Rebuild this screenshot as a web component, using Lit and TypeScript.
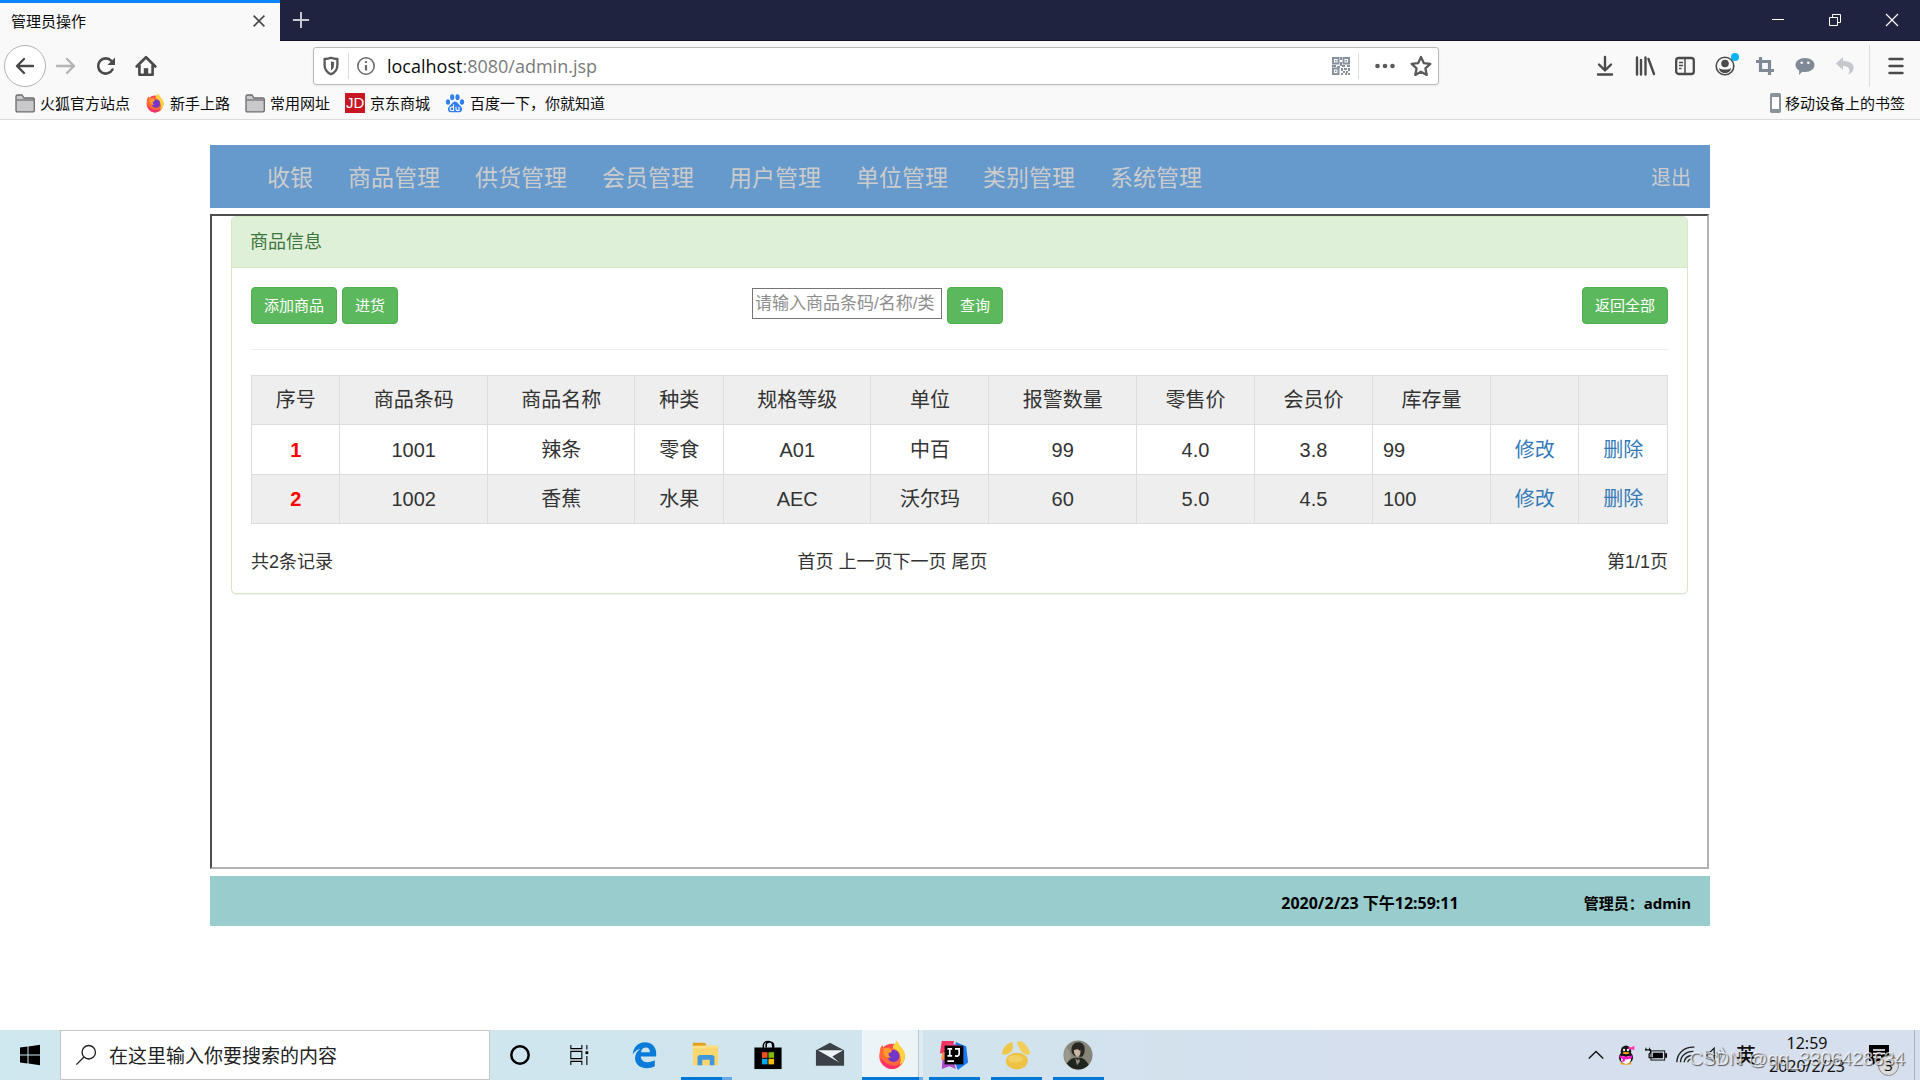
import { LitElement, html, svg, css, nothing } from "lit";
import type { TemplateResult } from "lit";
import { customElement } from "lit/decorators.js";

const icon = (name: string, size = 20): TemplateResult => html`
  <svg class="icon" width=${size} height=${size} viewBox=${boxes[name] ?? "0 0 20 20"} aria-hidden="true">${shapes[name]}</svg>`;

const boxes: Record<string, string> = {
  start: "0 0 24 24", lens: "0 0 24 24", cortana: "0 0 24 24", tasks: "0 0 24 24",
  edge: "0 0 32 32", explorer: "0 0 32 32", store: "0 0 32 32", mail: "0 0 32 32",
  firefox: "0 0 32 32", idea: "0 0 32 32", shell: "0 0 32 32", avatar: "0 0 32 32",
  battery: "0 0 24 24", qq: "0 0 24 24", wifi: "0 0 24 24", volume: "0 0 24 24", notice: "0 0 24 24",
};

const firefox = svg`
  <circle cx="16" cy="17.5" r="13.5" fill="#ff4a4f"/>
  <path d="M17 6c2-1 3-3 3.500-5.500 2 2 3.500 4 4 6.500 4 3 6 7 5 12-1 7-6.500 12-13 12 6-2 9.500-6 8.500-11-.6-5-4-7-8-8z" fill="#ffd43b"/>
  <path d="M3 13c0-4 1-6 3-8 0 1.500.5 2.500 1.500 3.500 3-.5 6-1 8.500 0 5 1 9 5 9 10 0 6-4 10-9 11.500C8 30 2.500 23 3 13z" fill="#ff6a35"/>
  <path d="M4 19c1 7 6 12 12 12 5 0 9-3 11-7-3 3-7 4-11 3-6-1-10-5-12-8z" fill="#ff2f6b"/>
  <circle cx="17.500" cy="17" r="6.500" fill="#7436c9"/>
  <path d="M7 9c3-1 7-.5 8.500 2 1 2-2 2.500-3 3-1 2 1 4 3 4.500-4 1.500-8-1-8.500-5z" fill="#ff9a2e"/>`;

const shapes: Record<string, unknown> = {
  back: svg`<path d="M18 10H2.500M9 3l-7 7 7 7" fill="none" stroke="#4a4a4b" stroke-width="2.400" stroke-linecap="round" stroke-linejoin="round"/>`,
  forward: svg`<path d="M1 10h17M11 3l7 7-7 7" fill="none" stroke="#b5b5b6" stroke-width="2.400" stroke-linecap="round" stroke-linejoin="round"/>`,
  reload: svg`<path d="M16.500 13.500A7.600 7.600 0 1 1 15.500 5" fill="none" stroke="#4a4a4b" stroke-width="2.600" stroke-linecap="round"/><path d="M19 1.500V9h-7.500z" fill="#4a4a4b"/>`,
  home: svg`<path d="M1.500 10.500 10 2l8.500 8.500M4 9.500V18h12V9.500" fill="none" stroke="#4a4a4b" stroke-width="2.400" stroke-linecap="round" stroke-linejoin="round"/><path d="M8 18v-6h4v6z" fill="#4a4a4b"/>`,
  shield: svg`<path d="M10 1.800c2 .9 4.200 1.200 6.400 1.200v6c0 4.500-2.600 7.600-6.400 9.300C6.200 16.600 3.600 13.500 3.600 9V3C5.800 3 8 2.700 10 1.800z" fill="none" stroke="#5a5a5b" stroke-width="2.300" stroke-linejoin="round"/><path d="M10 5.500v9c2-1.300 3-3 3-5.500V6z" fill="#5a5a5b"/>`,
  info: svg`<circle cx="10" cy="10" r="8.200" fill="none" stroke="#6a6a6b" stroke-width="1.600"/><path d="M10 9v5.500M10 5.200v1.900" stroke="#6a6a6b" stroke-width="2.200"/>`,
  qr: svg`<g fill="none" stroke="#87919d" stroke-width="2"><rect x="2" y="2" width="5.500" height="5.500"/><rect x="12.500" y="2" width="5.500" height="5.500"/><rect x="2" y="12.500" width="5.500" height="5.500"/></g><path d="M4 4h1.500v1.500H4zM14.500 4H16v1.500h-1.500zM4 14.500h1.500V16H4zM9 1h2v3H9zM9 6h2v4H9zM1 9h4v2H1zM6 10h3v2H6zM11 9h3v2h-3zM16 9h3v2h-3zM10 12h2v3h-2zM13 12h3v2h-3zM17 12h2v3h-2zM12 15h2v2h-2zM15 15h2v2h-2zM10 17h2v2h-2zM14 17h2v2h-2zM17 17h2v2h-2z" fill="#87919d"/>`,
  dots: svg`<g fill="#5a5a5b"><circle cx="2.500" cy="10" r="2.300"/><circle cx="10" cy="10" r="2.300"/><circle cx="17.500" cy="10" r="2.300"/></g>`,
  star: svg`<path d="m10 1.800 2.500 5.500 6 .7-4.500 4.100 1.200 6L10 15.200 4.800 18.100l1.200-6L1.500 8l6-.7z" fill="none" stroke="#5a5a5b" stroke-width="2.100" stroke-linejoin="round"/>`,
  download: svg`<path d="M10 1v13M4 8.500l6 6 6-6M3 18.500h14" fill="none" stroke="#4a4a4b" stroke-width="2.400" stroke-linecap="round" stroke-linejoin="round"/>`,
  library: svg`<path d="M2 1.500v17M6 4v14.500M10.500 1.500v17M13.500 3 19 18" fill="none" stroke="#4a4a4b" stroke-width="2.400" stroke-linecap="round"/>`,
  sidebar: svg`<rect x="1.200" y="2" width="17.600" height="16" rx="2.500" fill="none" stroke="#4a4a4b" stroke-width="2.300"/><path d="M10 3v14M4 6.500h4M4 9.500h4M4 12.500h2.500" stroke="#4a4a4b" stroke-width="1.500"/>`,
  account: svg`<circle cx="10" cy="10" r="8.800" fill="none" stroke="#4a4a4b" stroke-width="1.600"/><circle cx="10" cy="7.500" r="3.800" fill="#4a4a4b"/><path d="M4 12c2 2 10 2 12 0 0 3-3 5-6 5s-6-2-6-5z" fill="#4a4a4b"/>`,
  crop: svg`<path d="M5.500 1v13.500H19M1 5.500h13.500V19" fill="none" stroke="#808a96" stroke-width="3.200"/>`,
  chat: svg`<path d="M10 2c5.500 0 9.500 3 9.500 7s-4 7-9.500 7c-1 0-2-.1-2.800-.3L4 19l.2-4.500C1.900 13.200.5 11.200.5 9c0-4 4-7 9.500-7z" fill="#808a96"/><circle cx="6.700" cy="6.800" r="1.300" fill="#f9f9fa"/><circle cx="13.300" cy="6.800" r="1.300" fill="#f9f9fa"/>`,
  undo: svg`<path d="M8 1 .8 7.500 8 14v-4c4 0 6.500 1.500 6.500 4.500 0 1.800-.8 3-1.800 4 3.800-1 6-3.500 6-6.800C18.700 7.500 14.500 5 8 5z" fill="#c4c8cf"/>`,
  menu: svg`<path d="M3.500 3h13M3.500 10h13M3.500 17h13" stroke="#4a4a4b" stroke-width="2.400" stroke-linecap="round"/>`,
  folder: svg`<path d="M1 17.500v-14c0-.8.500-1.500 1.500-1.500H7l2 3h9c.8 0 1.300.5 1.300 1.300v11.200c0 .8-.5 1.300-1.300 1.300H2.300C1.500 18.800 1 18.300 1 17.500z" fill="#c9c9cb" stroke="#6b6b6d" stroke-width="1.300"/><path d="M1.500 7h17.500" stroke="#6b6b6d" stroke-width="1.200"/>`,
  baidu: svg`<g fill="#2f7fee"><ellipse cx="3" cy="9" rx="2.100" ry="2.800"/><ellipse cx="7.200" cy="4.200" rx="2.100" ry="3"/><ellipse cx="12.500" cy="4.200" rx="2.100" ry="3"/><ellipse cx="17" cy="9" rx="2.100" ry="2.800"/><path d="M10 8.500c2 0 3 2 4.500 3.500s3 2.500 2.500 5c-.7 3-4 2.300-7 2.300s-6.300.7-7-2.300c-.5-2.500 1-3.500 2.500-5S8 8.500 10 8.500z"/></g><path d="M8.500 11.500v6H6.800c-2.400 0-2.400-3.500 0-3.500h1.700M11 13.800v2.400c0 1 .7 1.300 1.500 1.300H14v-3.700" fill="none" stroke="#fff" stroke-width="1.100"/>`,
  phone: svg`<rect x="5" y="0" width="11" height="20" rx="1.800" fill="#8a939c"/><rect x="7" y="4" width="7" height="12" fill="#fff"/>`,
  close: svg`<path d="m4 4 12 12M16 4 4 16" stroke="#4a4a4b" stroke-width="1.800"/>`,
  plus: svg`<path d="M10 1v18M1 10h18" stroke="#c9c9d2" stroke-width="2.200"/>`,
  min: svg`<path d="M4 9.500h12" stroke="#fff"/>`,
  restore: svg`<path d="M4.500 7.500h8v8h-8zM7.500 7.500v-3h8v8h-3" fill="none" stroke="#fff"/>`,
  quit: svg`<path d="m4 4 12 12M16 4 4 16" stroke="#fff" stroke-width="1.200"/>`,
  start: svg`<path d="M2 4.600 9.500 3.500v8H2zM10.500 3.400 22 1.800v9.700H10.500zM2 12.500h7.500v8L2 19.400zM10.500 12.500H22v9.700l-11.500-1.600z" fill="#000"/>`,
  lens: svg`<circle cx="15" cy="9" r="7.300" fill="none" stroke="#222" stroke-width="1.500"/><path d="m9.800 14.200-8.300 8.300" stroke="#222" stroke-width="1.500"/>`,
  cortana: svg`<circle cx="12" cy="12" r="8.700" fill="none" stroke="#000" stroke-width="2.500"/>`,
  tasks: svg`<path d="M2 1v4h12V1M2 8h12v8H2zM2 23v-4h12v4M19.500 1v5M19.500 13v10" fill="none" stroke="#000" stroke-width="1.200"/><path d="M18 8h3v3h-3z" fill="#000"/>`,
  edge: svg`<path d="M4 15.500C4.600 8 9.500 2.500 17 2.500c7 0 12 5 12 11.500v3.500H12.500c.3 4 3.500 6.200 7.500 6.200 2.700 0 5.500-.8 7.500-2v6.300c-2.300 1.300-5.200 2-8.500 2C11 30 6.500 25.500 6.500 19.500c0-4.500 2-8 5.800-10C8.800 9.800 6 12 4 15.500zm8.800-2.500h9.500c0-3-1.500-5-4.300-5s-4.700 2-5.200 5z" fill="#0a7bd8"/>`,
  explorer: svg`<path d="M2 3h13l2 4H2z" fill="#e0a11d"/><path d="M2 6h27v21H2z" fill="#fbd66c"/><path d="M15 6h14v2H17L15 9H2V7z" fill="#fde08a"/><path d="M7 27v-9.500l2-1.500h14l2 1.500V27h-5v-6h-8v6z" fill="#3f97dd"/>`,
  store: svg`<path d="M11 9V6c0-6 10-6 10 0v3M14 8V5c0-4 8-4 8 1v2" fill="none" stroke="#000" stroke-width="1.600"/><path d="M1.500 8h29v23h-29z" fill="#000"/><path d="M9.500 13h6v6h-6z" fill="#f25022"/><path d="M16.500 13h6v6h-6z" fill="#7fba00"/><path d="M9.500 20h6v6h-6z" fill="#00a4ef"/><path d="M16.500 20h6v6h-6z" fill="#ffb900"/>`,
  mail: svg`<path d="M1 11 16 3l15 8v16.500H1z" fill="#3b4146"/><path d="M3 11h27l-11.500 6.500L26 24 3 11z" fill="#eef5f8"/>`,
  firefox,
  idea: svg`<path d="M3 1h13l-2 14L1 14z" fill="#f5315f"/><path d="m18 2 11 5 2 17-11 8-5-14z" fill="#1878f0"/><path d="m9 3 14 3 2 12H8z" fill="#e3457c"/><path d="m4 14 10 3 4 14-7-3-8 3z" fill="#b24bd0"/><path d="M4 13h6l-2 8H2z" fill="#ff8a3d"/><rect x="6" y="6" width="20" height="20" fill="#000"/><path d="M9 9.500h5M11.500 9.500V17M9 17h5M17 9.500h4.500V15c0 2-2 2.400-4.500 2M9 22.500h7" fill="none" stroke="#fff" stroke-width="1.800"/>`,
  shell: svg`<path d="M1 15.500C1.500 8.500 5.500 3.500 12 2c1 3 1 6.500-.5 10-2.500 2.500-6.500 4-10.500 3.500z" fill="#efc748"/><path d="M17 2.500c2-1.800 5-1.500 7 .5 3.500 3 6.500 7.500 7.200 12-3 1.200-6 .5-8.200-1.500-2.500-2.500-5-7-6-11z" fill="#f2cd58"/><ellipse cx="17" cy="22.500" rx="11.800" ry="9" fill="#edc245"/><ellipse cx="15.500" cy="20" rx="8" ry="4" fill="#f3d066"/>`,
  avatar: svg`<circle cx="16" cy="16" r="15.500" fill="#85857a"/><path d="M4 7A15 15 0 0 0 4 25l5-8z" fill="#9a998c"/><path d="M4 25c3-4 6-5.500 9-6l6 0c5 1.500 7 5 8.500 7.500-6 7-17 7-23.500-1.500z" fill="#20241f"/><path d="M9 10c0-5 4-8 8-7.500s7 4 6 9c0 3-1 5-3 6.500L12.500 17C10 15.500 8.800 13 9 10z" fill="#2a2723"/><path d="M11.500 11c2-1 4.500-1.500 7-.5.8 3.500-.8 7-2.800 8-2.500-1-4.200-4-4.200-7.500z" fill="#c9b6a2"/><path d="M11 12.500l2.500-5 5 4.500 0-7-6 0z" fill="#2a2723"/><path d="m13 19 3 3 1-3 1 4-3 4z" fill="#9a8f80"/>`,
  caret: svg`<path d="m2 14 8-8 8 8" fill="none" stroke="#111" stroke-width="1.500"/>`,
  qq: svg`<ellipse cx="12" cy="22" rx="7" ry="1.800" fill="#f5a623"/><ellipse cx="12" cy="15" rx="8.500" ry="7.500" fill="#151515"/><ellipse cx="12" cy="17" rx="6" ry="5.700" fill="#fff"/><ellipse cx="12" cy="7.500" rx="6.300" ry="6.800" fill="#151515"/><path d="M4 12c5 2.500 11 2.500 16 0l-1 4c-3 1-6 1.500-8 1.200L10 20H7.500l.5-3.500-3.500-1.500z" fill="#ff12c0"/><path d="M15 1.500 18 3l4-2v5l-4-1-3 1z" fill="#ff35b5"/><ellipse cx="9.700" cy="6" rx="1.300" ry="1.600" fill="#fff"/><ellipse cx="14.300" cy="6" rx="1.300" ry="1.600" fill="#fff"/><ellipse cx="12" cy="9.700" rx="4" ry="1.300" fill="#f5a623"/>`,
  battery: svg`<rect x="6.500" y="7.500" width="15" height="10" fill="none" stroke="#000"/><path d="M8.500 9.500h11v6h-11z" fill="#000"/><path d="M22 10h2v5h-2z" fill="#000"/><path d="M1 4v3M5 4v3" stroke="#000"/><path d="M0 6.500h6v3L4.500 11v4h6" fill="none" stroke="#000" stroke-width="1.300"/>`,
  wifi: svg`<g fill="none" stroke="#222" stroke-width="1.500"><path d="M2 20C2 10 10 3 21 3.500"/><path d="M6 20c0-7 6-12 14-12"/><path d="M10 20c0-4.500 4-7.500 9-7.500"/><path d="M14 20c0-2 2-3.500 4-3.500"/></g>`,
  volume: svg`<path d="M2 9h3.500L10 4.500v15L5.500 15H2z" fill="none" stroke="#111" stroke-width="1.300"/><path d="M13 9c1.500 2 1.500 4 0 6" fill="none" stroke="#222" stroke-width="1.300"/><path d="M16 6.500c3 3.500 3 7.500 0 11M19 4c4.500 5 4.500 11 0 16" fill="none" stroke="#9299a3" stroke-width="1.200"/>`,
  notice: svg`<path d="M2 2h20v16H10l-4 4v-4H2z" fill="#000"/><path d="M6 7h12M6 10.500h12M6 14h8" stroke="#fff" stroke-width="1.300"/>`,
};

interface Product {
  code: string; name: string; kind: string; grade: string; unit: string;
  alarm: string; retail: string; member: string; stock: string;
}

const MENU = ["收银", "商品管理", "供货管理", "会员管理", "用户管理", "单位管理", "类别管理", "系统管理"];
const COLUMNS: [string, number][] = [
  ["序号", 3], ["商品条码", 5], ["商品名称", 5], ["种类", 3], ["规格等级", 5], ["单位", 4],
  ["报警数量", 5], ["零售价", 4], ["会员价", 4], ["库存量", 4], ["", 3], ["", 3],
];
const PRODUCTS: Product[] = [
  { code: "1001", name: "辣条", kind: "零食", grade: "A01", unit: "中百", alarm: "99", retail: "4.0", member: "3.8", stock: "99" },
  { code: "1002", name: "香蕉", kind: "水果", grade: "AEC", unit: "沃尔玛", alarm: "60", retail: "5.0", member: "4.5", stock: "100" },
];

const base = css`
  * { box-sizing: border-box; }
  button, input { font: inherit; color: inherit; margin: 0; }
  button { border: 0; background: none; padding: 0; cursor: pointer; }
  a { color: inherit; text-decoration: none; }
  .icon { display: block; flex: none; overflow: visible; }
`;

@customElement("browser-chrome")
export class BrowserChrome extends LitElement {
  static styles = [base, css`
    :host { display: block; background: #f9f9fa; border-bottom: 1px solid #dcdcdd; font: 15px/20px "Noto Sans", "Noto Sans CJK SC", sans-serif; color: #0c0c0d; }
    .tabs { display: flex; height: 41px; background: #202340; border-bottom: 1px solid #12132b; }
    .tab { display: flex; align-items: center; justify-content: space-between; width: 280px; height: 41px; padding: 0 12px 3px 11px; background: #f9f9fa; border-top: 3px solid #0a84ff; }
    .new { width: 42px; display: grid; place-items: center; }
    .controls { display: flex; margin-left: auto; }
    .controls button { width: 57px; display: grid; place-items: center; }
    .bar { display: flex; align-items: center; height: 50px; }
    .nav { display: flex; align-items: center; padding-left: 4px; width: 313px; flex: none; }
    .nav button { width: 40px; height: 42px; display: grid; place-items: center; }
    .nav .round { width: 42px; border: 1px solid #b4b4b6; border-radius: 50%; background: #fff; }
    .url { display: flex; align-items: center; flex: 1; height: 38px; background: #fff; border: 1px solid #b9b9bb; border-radius: 3px; box-shadow: 0 1px 3px #0001; }
    .url button { height: 36px; width: 34px; display: grid; place-items: center; }
    .url .wide { width: 51px; }
    .url .narrow { width: 22px; margin-right: 6px; }
    .url input { border: 0; outline: 0; background: none; min-width: 0; color: transparent; caret-color: #000; padding: 0; height: 34px; }
    .address { display: grid; flex: 1; font-size: 18px; align-items: center; padding-left: 4px; }
    .address > * { grid-area: 1 / 1; }
    .shown { pointer-events: none; color: #7b7b7c; font-family: "Open Sans", sans-serif; }
    .shown b { font-weight: 400; color: #0c0c0d; }
    .line { width: 1px; height: 26px; background: #dcdcde; }
    .tools { display: flex; align-items: center; margin-left: 146px; padding-right: 4px; }
    .tools button { width: 40px; height: 40px; display: grid; place-items: center; position: relative; }
    .tools .line { height: 42px; margin: 0 6px 0 4px; }
    .dot { position: absolute; right: 6px; top: 7px; width: 8px; height: 8px; border-radius: 50%; background: #00b3f4; }
    .marks { display: flex; gap: 15px; height: 28px; padding: 0 15px 4px; align-items: center; }
    .marks a { display: flex; align-items: center; gap: 5px; white-space: nowrap; }
    .marks .mobile { margin-left: auto; gap: 0; }
    .jd { width: 20px; height: 20px; background: #c81623; color: #fff; text-align: center; font: 15px/20px "Liberation Sans", sans-serif; }
  `];

  render() {
    return html`
      <div class="tabs">
        <div class="tab"><span>管理员操作</span><button aria-label="关闭标签页">${icon("close", 18)}</button></div>
        <button class="new" aria-label="新标签页">${icon("plus", 18)}</button>
        <div class="controls">
          <button aria-label="最小化">${icon("min")}</button>
          <button aria-label="还原">${icon("restore")}</button>
          <button aria-label="关闭">${icon("quit")}</button>
        </div>
      </div>
      <div class="bar">
        <div class="nav">
          <button class="round" aria-label="后退">${icon("back")}</button>
          <button aria-label="前进">${icon("forward")}</button>
          <button aria-label="刷新">${icon("reload")}</button>
          <button aria-label="主页">${icon("home", 22)}</button>
        </div>
        <div class="url">
          <button aria-label="跟踪保护">${icon("shield")}</button>
          <span class="line"></span>
          <button aria-label="网站信息">${icon("info")}</button>
          <div class="address">
            <input aria-label="地址" />
            <span class="shown"><b>localhost</b>:8080/admin.jsp</span>
          </div>
          <button aria-label="二维码">${icon("qr")}</button>
          <span class="line"></span>
          <button class="wide" aria-label="页面操作">${icon("dots")}</button>
          <button class="narrow" aria-label="收藏">${icon("star", 22)}</button>
        </div>
        <div class="tools">
          ${["download", "library", "sidebar", "account", "crop", "chat", "undo"].map((n) => html`
            <button aria-label=${n}>${icon(n)}${n === "account" ? html`<span class="dot"></span>` : nothing}</button>`)}
          <span class="line"></span>
          <button aria-label="菜单">${icon("menu")}</button>
        </div>
      </div>
      <nav class="marks" aria-label="书签">
        <a href="#">${icon("folder")}火狐官方站点</a>
        <a href="#">${icon("firefox")}新手上路</a>
        <a href="#">${icon("folder")}常用网址</a>
        <a href="#"><span class="jd">JD</span>京东商城</a>
        <a href="#">${icon("baidu")}百度一下，你就知道</a>
        <a href="#" class="mobile">${icon("phone")}移动设备上的书签</a>
      </nav>`;
  }
}

@customElement("product-panel")
export class ProductPanel extends LitElement {
  static styles = [base, css`
    :host { display: block; border: 1px solid #d6e9c6; border-radius: 5px; background: #fff; box-shadow: 0 1px 1px #0001; font: 18px/25px "Liberation Sans", "Noto Sans CJK SC", sans-serif; color: #333; }
    .head { margin: 0; padding: 13px 18px 12px; background: #dff0d8; border-bottom: 1px solid #d6e9c6; color: #3c763d; font-size: 18px; font-weight: 400; border-radius: 4px 4px 0 0; }
    .body { padding: 19px 19px 18px; }
    .tools { display: grid; grid-template-columns: 501fr auto 665fr; }
    .pages { display: grid; grid-template-columns: 547fr auto 681fr; }
    .group { display: flex; gap: 5px; align-items: center; }
    .group:last-child, .pages span:last-child { justify-self: end; }
    .btn { height: 37px; padding: 0 12px; background: #5cb85c; border: 1px solid #4cae4c; border-radius: 4px; color: #fff; font-size: 15px; line-height: 22px; }
    .find { align-items: flex-start; }
    .find input { width: 190px; height: 31px; margin-top: 1px; padding: 1px 2px 0; border: 1px solid #767676; background: #fff; font-size: 17px; outline: 0; }
    .find input::placeholder { color: #8e8e8e; opacity: 1; }
    hr { margin: 25px 0; border: 0; border-top: 1px solid #eee; }
    table { width: 100%; border-collapse: collapse; table-layout: fixed; font-size: 20px; line-height: 28px; }
    th, td { border: 1px solid #ddd; padding: 10px; height: 49px; text-align: center; font-weight: 400; }
    tbody tr:first-child > * { height: 50px; }
    thead tr, tbody tr:nth-child(even) { background: #eee; }
    tbody th { color: #f00; font-weight: 700; }
    tbody .left { text-align: left; }
    td a { color: #337ab7; }
    .pages { margin-top: 26px; }
  `];

  render() {
    return html`
      <h1 class="head">商品信息</h1>
      <div class="body">
        <div class="tools">
          <div class="group"><button class="btn">添加商品</button><button class="btn">进货</button></div>
          <div class="group find">
            <input type="text" aria-label="查询商品" placeholder="请输入商品条码/名称/类" />
            <button class="btn">查询</button>
          </div>
          <div class="group"><button class="btn">返回全部</button></div>
        </div>
        <hr />
        <table>
          <colgroup>${COLUMNS.map(([, w]) => html`<col style="width:${(w / 48) * 100}%" />`)}</colgroup>
          <thead><tr>${COLUMNS.map(([t]) => t ? html`<th scope="col">${t}</th>` : html`<td></td>`)}</tr></thead>
          <tbody>
            ${PRODUCTS.map((p, i) => html`<tr>
              <th scope="row">${i + 1}</th>
              <td>${p.code}</td><td>${p.name}</td><td>${p.kind}</td><td>${p.grade}</td><td>${p.unit}</td>
              <td>${p.alarm}</td><td>${p.retail}</td><td>${p.member}</td><td class="left">${p.stock}</td>
              <td><a href="#">修改</a></td><td><a href="#">删除</a></td>
            </tr>`)}
          </tbody>
        </table>
        <div class="pages">
          <span>共2条记录</span>
          <span><a href="#">首页</a> <a href="#">上一页</a><a href="#">下一页</a> <a href="#">尾页</a></span>
          <span>第1/1页</span>
        </div>
      </div>`;
  }
}

@customElement("admin-page")
export class AdminPage extends LitElement {
  static styles = [base, css`
    :host { display: flex; flex-direction: column; padding: 25px 210px; background: #fff; font-family: "Liberation Sans", "Noto Sans CJK SC", sans-serif; }
    .nav { display: flex; align-items: center; height: 63px; padding: 2px 19px 0 57px; gap: 35px; background: #69c; color: #ccc; font-size: 23px; line-height: 30px; white-space: nowrap; }
    .exit { margin-left: auto; font-size: 20px; }
    .frame { min-height: 655px; margin: 6px 1px 7px 0; padding: 0 19px; border: 2px solid; border-color: #4d4d4d #b2b2b2 #b2b2b2 #4d4d4d; }
    .foot { display: flex; align-items: center; justify-content: flex-end; gap: 125px; height: 50px; padding: 4px 19px 0 0; background: #9cc; color: #000; font: 700 15px/20px "Noto Sans", "Noto Sans CJK SC", sans-serif; }
    .time { font-size: 16px; }
  `];

  render() {
    return html`
      <nav class="nav" aria-label="功能">
        ${MENU.map((m) => html`<a href="#">${m}</a>`)}
        <a href="#" class="exit">退出</a>
      </nav>
      <main class="frame"><product-panel></product-panel></main>
      <footer class="foot"><span class="time">2020/2/23 下午12:59:11</span><span>管理员：admin</span></footer>`;
  }
}

@customElement("task-bar")
export class TaskBar extends LitElement {
  static styles = [base, css`
    :host { display: flex; height: 50px; background: linear-gradient(90deg, #cfe7ef, #d0e5ee 45%, #d5dfed 70%, #d5dfed); font: 19px/26px "Noto Sans", "Noto Sans CJK SC", sans-serif; color: #111; position: relative; }
    button { display: grid; place-items: center; width: 60px; }
    .search { display: flex; align-items: center; gap: 12px; width: 430px; padding: 0 14px; background: #fff; border: 1px solid #c8c4c8; }
    .search input { flex: 1; min-width: 0; padding: 0; border: 0; outline: 0; background: none; font-family: "Noto Sans CJK SC", sans-serif; }
    .search input::placeholder { color: #222; opacity: 1; }
    .apps { display: flex; padding-left: 3px; }
    .apps button { width: 62px; }
    .apps .open { background: linear-gradient(#0078d7, #0078d7) 6px 100% / 51px 3px no-repeat; }
    .apps .many { background-image: linear-gradient(90deg, #0078d7 41px, #62abe4 41px); }
    .apps .active { background:
      linear-gradient(90deg, #0078d7 57px, #62abe4 57px) 1px 100% / 61px 3px no-repeat,
      linear-gradient(90deg, #ecf4f8 56px, #b3c8d2 56px, #b3c8d2 57px, #e0ecf3 57px) 1px 0 / 61px 100% no-repeat; }
    .tray { display: flex; align-items: center; margin-left: auto; padding-right: 5px; border-right: 1px solid #aab2bf; margin-right: 5px; }
    .tray button { width: 30px; height: 50px; }
    .tray .lang { font: 500 20px/26px "Noto Sans CJK SC", sans-serif; }
    .clock { width: 92px; text-align: center; font-size: 16px; line-height: 23px; color: #111; }
    .tray .notice { width: 32px; position: relative; margin: 0 14px 0 10px; }
    .badge { position: absolute; left: 15px; top: 25px; width: 21px; height: 21px; border: 1px solid #888; border-radius: 50%; background: #dcdcdc; font-size: 15px; line-height: 19px; }
    .mark { position: absolute; right: 15px; bottom: 5px; font: 19px/32px "Liberation Sans", sans-serif; color: #ffffffb0; text-shadow: 1px 1px 1px #0009; pointer-events: none; }
  `];

  private app(name: string, label: string, state = "") {
    return html`<button class=${state} aria-label=${label}>${icon(name, 30)}</button>`;
  }

  render() {
    return html`
      <button aria-label="开始">${icon("start", 24)}</button>
      <label class="search">${icon("lens", 22)}<input type="text" aria-label="搜索" placeholder="在这里输入你要搜索的内容" /></label>
      <button aria-label="语音助手">${icon("cortana", 24)}</button>
      <button aria-label="任务视图">${icon("tasks", 22)}</button>
      <div class="apps">
        ${this.app("edge", "Edge")}
        ${this.app("explorer", "文件资源管理器", "open many")}
        ${this.app("store", "应用商店")}
        ${this.app("mail", "邮件")}
        ${this.app("firefox", "Firefox", "open active")}
        ${this.app("idea", "IntelliJ IDEA", "open")}
        ${this.app("shell", "Navicat", "open")}
        ${this.app("avatar", "头像", "open")}
      </div>
      <div class="tray">
        <button aria-label="显示隐藏的图标">${icon("caret", 18)}</button>
        <button aria-label="QQ">${icon("qq", 20)}</button>
        <button aria-label="电源">${icon("battery", 22)}</button>
        <button aria-label="网络">${icon("wifi", 22)}</button>
        <button aria-label="音量">${icon("volume", 22)}</button>
        <button class="lang">英</button>
        <div class="clock">12:59<br />2020/2/23</div>
        <button class="notice" aria-label="通知">${icon("notice", 24)}<span class="badge">3</span></button>
      </div>
      <span class="mark">CSDN @qq_3306428634</span>`;
  }
}

@customElement("app-root")
export class AppRoot extends LitElement {
  static styles = css`
    :host { display: flex; flex-direction: column; min-height: 100vh; background: #fff; }
    .page { flex: 1; }
  `;

  render() {
    return html`
      <browser-chrome></browser-chrome>
      <admin-page class="page"></admin-page>
      <task-bar></task-bar>`;
  }
}
